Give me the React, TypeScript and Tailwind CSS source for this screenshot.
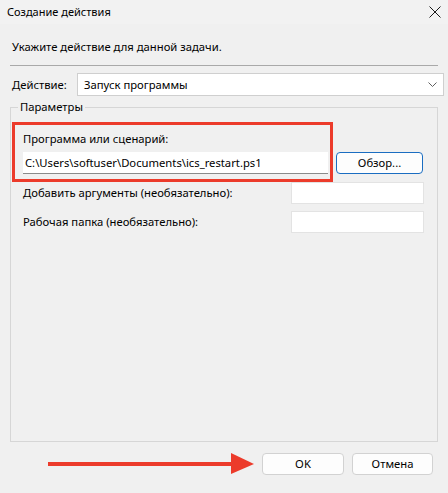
import React from "react";

const font = { fontFamily: '"Segoe UI", "Noto Sans", Roboto, sans-serif' };

export default function App() {
  return (
    <div
      className="relative w-[448px] h-[493px] bg-[#f0f0f0] text-[11.25px] text-black flex flex-col overflow-hidden"
      style={font}
    >
      {/* Title bar */}
      <div className="h-[24px] flex items-center justify-between pl-[7px] pr-[7px] bg-[#f2f2f2]">
        <span className="leading-[16px] text-[11px]">Создание действия</span>
        <svg width="12" height="12" viewBox="0 0 12 12">
          <path d="M0.5 0.5 L11.5 11.5 M11.5 0.5 L0.5 11.5" stroke="#1a1a1a" strokeWidth="1" />
        </svg>
      </div>

      {/* Instruction */}
      <div className="pl-[12px] mt-[15px] leading-[16px]">Укажите действие для данной задачи.</div>

      {/* Separator */}
      <div className="mx-[10px] w-[428px] mt-[10px] border-t border-[#a9a9a9]" />

      {/* Action row */}
      <div className="flex items-center mt-[7px] pl-[12px] pr-[4px]">
        <span className="w-[65px] leading-[16px]">Действие:</span>
        <div className="flex-1 h-[23px] bg-white border border-[#cfcfcf] flex items-center justify-between pl-[6px] pr-[6px]">
          <span className="leading-[16px]">Запуск программы</span>
          <svg width="9" height="6" viewBox="0 0 9 6">
            <path d="M0.5 0.5 L4.5 4.5 L8.5 0.5" fill="none" stroke="#606060" strokeWidth="1" />
          </svg>
        </div>
      </div>

      {/* Group box */}
      <div className="relative ml-[10px] w-[428px] h-[335px] mt-[11px] border border-[#d6d6d6]">
        <span className="absolute left-[7px] top-[-9px] px-[2px] bg-[#f0f0f0] leading-[16px]">Параметры</span>

        <div className="flex flex-col pl-[12px] pt-[23px]">
          <span className="leading-[16px]">Программа или сценарий:</span>
          <div className="flex items-center mt-[5px]">
            <div className="w-[305px] h-[22px] bg-white border-b border-[#8a8a8a] flex items-center pl-[2px]">
              <span className="leading-[16px]">C:\Users\softuser\Documents\ics_restart.ps1</span>
            </div>
            <div className="ml-[8px] w-[87px] h-[22px] rounded-[4px] border border-[#1a6dc1] bg-[#fdfdfd] flex items-center justify-center">
              <span className="leading-[16px]">Обзор...</span>
            </div>
          </div>

          <div className="flex items-center justify-between mt-[8px] pr-[13px]">
            <span className="leading-[16px]">Добавить аргументы (необязательно):</span>
            <div className="w-[133px] h-[22px] bg-white border border-[#e3e3e3]" />
          </div>
          <div className="flex items-center justify-between mt-[7px] pr-[13px]">
            <span className="leading-[16px]">Рабочая папка (необязательно):</span>
            <div className="w-[133px] h-[22px] bg-white border border-[#e3e3e3]" />
          </div>
        </div>

        {/* Red highlight annotation */}
        <div className="absolute left-[1px] top-[14px] w-[321px] h-[60px] border-[3px] border-[#ec3b2b] pointer-events-none" />
      </div>

      {/* Buttons */}
      <div className="flex items-center justify-end mt-[11px] pr-[15px] gap-[8px]">
        <div className="relative">
          {/* Red arrow annotation */}
          <svg
            width="210"
            height="22"
            viewBox="0 0 210 22"
            className="absolute right-[calc(100%+4px)] top-0"
          >
            <rect x="0" y="9" width="188" height="4" fill="#ec3b2b" />
            <polygon points="183,0 206,11 183,21" fill="#ec3b2b" />
          </svg>
          <div className="w-[82px] h-[22px] rounded-[4px] border border-[#d2d2d2] bg-[#fdfdfd] flex items-center justify-center">
            <span className="leading-[16px]">OK</span>
          </div>
        </div>
        <div className="w-[81px] h-[22px] rounded-[4px] border border-[#d2d2d2] bg-[#fdfdfd] flex items-center justify-center">
          <span className="leading-[16px]">Отмена</span>
        </div>
      </div>
    </div>
  );
}
